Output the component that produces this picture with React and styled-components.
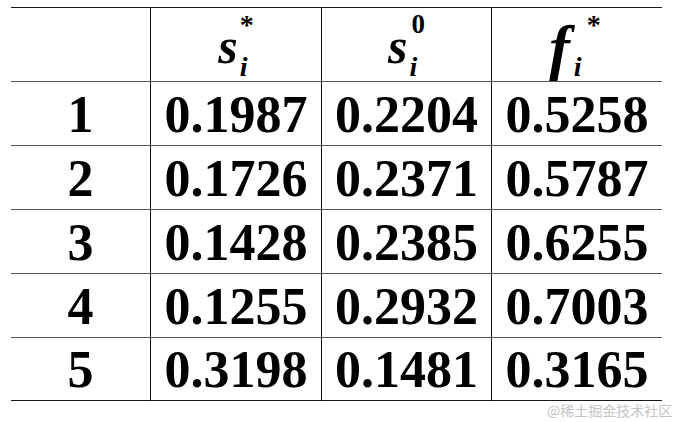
import React from "react";
import styled, { createGlobalStyle } from "styled-components";

const Global = createGlobalStyle`
  html, body { margin: 0; padding: 0; background: #fff; }
  body { width: 678px; height: 422px; overflow: hidden; }
`;

const Page = styled.div`
  position: relative;
  width: 678px;
  height: 422px;
  box-sizing: border-box;
  padding: 7px 0 0 11px;
  font-family: "Liberation Serif", "Times New Roman", serif;
  color: #000;
`;

const Table = styled.div`
  display: grid;
  grid-template-columns: 139px 171px 170px 171px;
  grid-template-rows: 74px 64px 64px 64px 64px 63px;
  border-top: 1px solid #1a1a1a;
  width: 651px;
`;

const Cell = styled.div`
  box-sizing: border-box;
  display: flex;
  align-items: center;
  justify-content: center;
  border-bottom: 1px solid ${(p) => (p.$last ? "#1a1a1a" : "#555")};
  border-left: ${(p) => (p.$first ? "none" : "1px solid #111")};
  font-weight: bold;
  font-size: 52px;
  line-height: 1;
  padding-top: 2px;
`;

const Sym = styled.div`
  display: flex;
  align-items: center;
  margin-left: ${(p) => p.$shift || 0}px;
`;

const Base = styled.span`
  font-style: italic;
  font-weight: bold;
  font-size: ${(p) => p.$size || 50}px;
  line-height: 1;
  margin-top: ${(p) => p.$mt || 0}px;
`;

const Scripts = styled.span`
  display: flex;
  flex-direction: column;
  gap: 15px;
  margin-left: ${(p) => p.$ml ?? 2}px;
`;

const Sup = styled.span`
  font-weight: bold;
  font-size: ${(p) => (p.$star ? 28 : 27)}px;
  line-height: 1;
  margin-left: ${(p) => p.$ml || 0}px;
  height: 27px;
`;

const Sub = styled.span`
  font-style: italic;
  font-weight: bold;
  font-size: 28px;
  line-height: 1;
`;

const Watermark = styled.div`
  position: absolute;
  left: 547px;
  top: 401px;
  font-family: "Noto Sans CJK SC", "Noto Sans", sans-serif;
  font-size: 14px;
  line-height: 18px;
  color: #c4c4c4;
`;

const rows = [
  ["1", "0.1987", "0.2204", "0.5258"],
  ["2", "0.1726", "0.2371", "0.5787"],
  ["3", "0.1428", "0.2385", "0.6255"],
  ["4", "0.1255", "0.2932", "0.7003"],
  ["5", "0.3198", "0.1481", "0.3165"],
];

export default function App() {
  return (
    <>
      <Global />
      <Page>
        <Table>
          <Cell $first />
          <Cell>
            <Sym>
              <Base>s</Base>
              <Scripts $ml={2}>
                <Sup $star>*</Sup>
                <Sub>i</Sub>
              </Scripts>
            </Sym>
          </Cell>
          <Cell>
            <Sym>
              <Base>s</Base>
              <Scripts $ml={2}>
                <Sup $ml={2}>0</Sup>
                <Sub>i</Sub>
              </Scripts>
            </Sym>
          </Cell>
          <Cell>
            <Sym $shift={-4}>
              <Base $size={62} $mt={2}>f</Base>
              <Scripts $ml={4}>
                <Sup $star $ml={13}>*</Sup>
                <Sub>i</Sub>
              </Scripts>
            </Sym>
          </Cell>
          {rows.map((r, i) =>
            r.map((v, j) => (
              <Cell key={`${i}-${j}`} $first={j === 0} $last={i === rows.length - 1}>
                {v}
              </Cell>
            ))
          )}
        </Table>
        <Watermark>@稀土掘金技术社区</Watermark>
      </Page>
    </>
  );
}
